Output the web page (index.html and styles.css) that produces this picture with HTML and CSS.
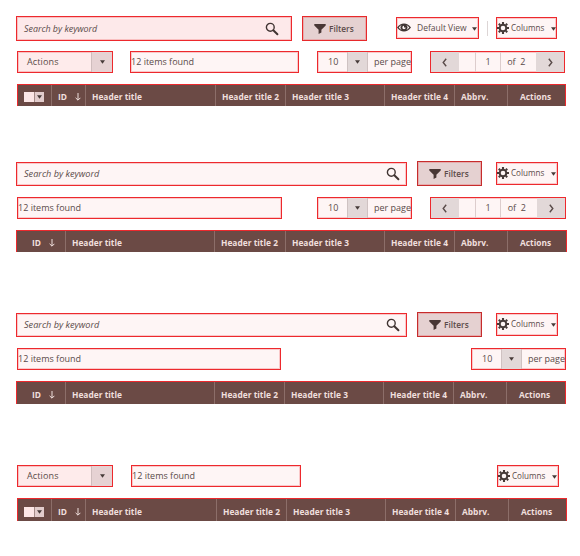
FILE: index.html
```html
<!DOCTYPE html>
<html lang="en">
<head>
<meta charset="utf-8">
<title>Data grid toolbars</title>
<link rel="stylesheet" href="styles.css">
</head>
<body>
<svg class="defs" width="0" height="0" aria-hidden="true">
  <symbol id="search" viewBox="0 0 14 14"><circle cx="5.3" cy="5.3" r="3.9" fill="none" stroke="currentColor" stroke-width="1.4"/><path d="M8.3 8.3L12.4 12.3" stroke="currentColor" stroke-width="2" stroke-linecap="round"/></symbol>
  <symbol id="filter" viewBox="0 0 12 10"><path d="M.3 0H11.7V1.4L7.4 5.8V8.6L4.6 10V5.8L.3 1.4Z" fill="currentColor"/></symbol>
  <symbol id="eye" viewBox="0 0 14 9"><path fill="currentColor" fill-rule="evenodd" d="M0 4.5Q3 .5 7 .5T14 4.5Q11 8.5 7 8.5T0 4.5ZM1.7 4.5Q3 6.4 4.7 7A3.5 3.5 0 0 1 4.7 2Q3 2.6 1.7 4.5ZM12.3 4.5Q11 2.6 9.3 2A3.5 3.5 0 0 1 9.3 7Q11 6.4 12.3 4.5ZM7 2.8A1.7 1.7 0 1 0 8.7 4.5H7Z"/></symbol>
  <symbol id="gear" viewBox="0 0 12 12"><circle cx="6" cy="6" r="3.3" fill="none" stroke="currentColor" stroke-width="2"/><path d="M6 0V2M6 10V12M0 6H2M10 6H12M1.8 1.8L3.2 3.2M8.8 8.8L10.2 10.2M10.2 1.8L8.8 3.2M3.2 8.8L1.8 10.2" stroke="currentColor" stroke-width="2.1"/></symbol>
  <symbol id="caret" viewBox="0 0 5 4"><path d="M0 .3H5L2.5 3.8Z" fill="currentColor"/></symbol>
  <symbol id="prev" viewBox="0 0 5 9"><path d="M4.2.8L1.2 4.5L4.2 8.2" fill="none" stroke="currentColor" stroke-width="1.4"/></symbol>
  <symbol id="next" viewBox="0 0 5 9"><path d="M.8.8L3.8 4.5L.8 8.2" fill="none" stroke="currentColor" stroke-width="1.4"/></symbol>
  <symbol id="sort" viewBox="0 0 6 8"><path d="M3 0V7M.6 4.8L3 7.2L5.4 4.8" fill="none" stroke="currentColor" stroke-width="1"/></symbol>
</svg>

<section class="panel first">
  <div class="row top">
    <div class="box search short"><span>Search by keyword</span><svg><use href="#search"/></svg></div>
    <div class="box filters"><svg><use href="#filter"/></svg><span>Filters</span></div>
    <div class="tools">
      <div class="box view"><svg class="eye"><use href="#eye"/></svg><span>Default View</span><svg class="caret"><use href="#caret"/></svg></div>
      <i class="rule"></i>
      <div class="box columns"><svg class="gear"><use href="#gear"/></svg><span>Columns</span><svg class="caret"><use href="#caret"/></svg></div>
    </div>
  </div>
  <div class="row middle">
    <div class="box actions"><span>Actions</span><b><svg class="caret"><use href="#caret"/></svg></b></div>
    <div class="box found"><span>12 items found</span></div>
    <div class="box perpage"><span>10</span><b><svg class="caret"><use href="#caret"/></svg></b><em>per page</em></div>
    <div class="box pager"><b><svg><use href="#prev"/></svg></b><i></i><span>1</span><span>of&nbsp; 2</span><b><svg><use href="#next"/></svg></b></div>
  </div>
  <div class="head selectable">
    <div class="pick"><i></i><b><svg class="caret"><use href="#caret"/></svg></b></div>
    <div class="id">ID<svg><use href="#sort"/></svg></div><div>Header title</div><div>Header title 2</div><div>Header title 3</div><div>Header title 4</div><div>Abbrv.</div><div class="last">Actions</div>
  </div>
</section>

<section class="panel second">
  <div class="row top">
    <div class="box search"><span>Search by keyword</span><svg><use href="#search"/></svg></div>
    <div class="box filters"><svg><use href="#filter"/></svg><span>Filters</span></div>
    <div class="box columns"><svg class="gear"><use href="#gear"/></svg><span>Columns</span><svg class="caret"><use href="#caret"/></svg></div>
  </div>
  <div class="row middle">
    <div class="box found wide"><span>12 items found</span></div>
    <div class="box perpage"><span>10</span><b><svg class="caret"><use href="#caret"/></svg></b><em>per page</em></div>
    <div class="box pager"><b><svg><use href="#prev"/></svg></b><i></i><span>1</span><span>of&nbsp; 2</span><b><svg><use href="#next"/></svg></b></div>
  </div>
  <div class="head">
    <div class="id">ID<svg><use href="#sort"/></svg></div><div>Header title</div><div>Header title 2</div><div>Header title 3</div><div>Header title 4</div><div>Abbrv.</div><div class="last">Actions</div>
  </div>
</section>

<section class="panel third">
  <div class="row top">
    <div class="box search"><span>Search by keyword</span><svg><use href="#search"/></svg></div>
    <div class="box filters"><svg><use href="#filter"/></svg><span>Filters</span></div>
    <div class="box columns"><svg class="gear"><use href="#gear"/></svg><span>Columns</span><svg class="caret"><use href="#caret"/></svg></div>
  </div>
  <div class="row middle">
    <div class="box found wide"><span>12 items found</span></div>
    <div class="box perpage"><span>10</span><b><svg class="caret"><use href="#caret"/></svg></b><em>per page</em></div>
  </div>
  <div class="head">
    <div class="id">ID<svg><use href="#sort"/></svg></div><div>Header title</div><div>Header title 2</div><div>Header title 3</div><div>Header title 4</div><div>Abbrv.</div><div class="last">Actions</div>
  </div>
</section>

<section class="panel fourth">
  <div class="row middle">
    <div class="box actions"><span>Actions</span><b><svg class="caret"><use href="#caret"/></svg></b></div>
    <div class="box found"><span>12 items found</span></div>
    <div class="box columns"><svg class="gear"><use href="#gear"/></svg><span>Columns</span><svg class="caret"><use href="#caret"/></svg></div>
  </div>
  <div class="head selectable">
    <div class="pick"><i></i><b><svg class="caret"><use href="#caret"/></svg></b></div>
    <div class="id">ID<svg><use href="#sort"/></svg></div><div>Header title</div><div>Header title 2</div><div>Header title 3</div><div>Header title 4</div><div>Abbrv.</div><div class="last">Actions</div>
  </div>
</section>
</body>
</html>
```
FILE: styles.css
```css
* { box-sizing: border-box; }
body {
  margin: 0;
  padding-top: 16px;
  background: #fff;
  color: #5a4b49;
  font: 9px/12px "Open Sans", "Noto Sans", sans-serif;
  white-space: nowrap;
}
svg { display: block; flex: none; }
.defs { position: absolute; }
.panel { margin-left: 16px; width: 551px; }
.row { display: flex; }
.top { height: 25px; margin-bottom: 10px; align-items: center; }
.middle { height: 22px; margin-bottom: 11px; padding-left: 1px; }
.first { height: 145px; }
.second { height: 151px; }
.third { height: 153px; }
.second .top, .third .top { margin-bottom: 11px; }

.box {
  display: flex;
  flex: none;
  align-items: center;
  height: 22px;
  border: 1px solid #ed292d;
  background: #fef5f5;
  box-shadow: inset 0 0 0 1px #ed292d38;
}
.box b {
  display: flex;
  align-items: center;
  justify-content: center;
  align-self: stretch;
  background: #e2d8d8;
}
.middle .box { padding-top: 0; }
.caret { width: 5px; height: 4px; color: #463a38; }

.search { width: 391px; height: 24px; padding: 0 6px 0 7px; justify-content: space-between; font-size: 9.15px; font-style: italic; }
.search svg { width: 14px; height: 14px; color: #403432; }
.search.short { width: 276px; height: 25px; padding-right: 12px; background: #fde9ea; font-size: 8.9px; }
.filters { width: 65px; height: 25px; margin-left: 10px; padding-left: 11px; border-color: #c62c2c; background: #e5d1d1; font-size: 8.3px; font-weight: 600; }
.first .filters { border-color: #e7292b; }
.filters svg { width: 12px; height: 10px; margin-right: 3px; color: #493735; }
.tools { display: flex; align-items: center; margin-left: 29px; padding-bottom: 1px; }
.view { width: 83px; padding-bottom: 1px; font-size: 8.5px; }
.eye { width: 14px; height: 9px; margin-right: 6px; color: #403432; }
.view span { width: 55px; }
.rule { width: 1px; height: 15px; margin: 0 8px; background: #ddd5d5; }
.columns { width: 62px; height: 23px; margin-left: 14px; padding-bottom: 1px; font-size: 8.1px; }
.tools .columns { width: 61px; height: 22px; margin-left: 0; }
.gear { width: 12px; height: 12px; margin-right: 2px; color: #463a38; }
.columns span { width: 40px; }
.columns .caret, .view .caret { margin-top: 2px; }

.actions { width: 96px; background: #feebeb; }
.actions span { width: 73px; padding-left: 9px; letter-spacing: .12px; }
.actions b { width: 21px; border-left: 1px solid #cfbdbd; background: #e6d2d3; }
.found { width: 169px; margin-left: 17px; }
.found.wide { width: 265px; margin-left: 0; }
.perpage { width: 95px; margin-left: 18px; overflow: hidden; }
.perpage span { width: 29px; padding-left: 10px; }
.perpage b { width: 22px; border: solid #cfc2c2; border-width: 0 1px; }
.perpage em { margin-left: 6px; font-style: normal; }
.pager { width: 136px; margin-left: 18px; }
.first .pager { width: 135px; }
.pager b { width: 28px; }
.pager svg { width: 5px; height: 9px; }
.pager i { width: 16px; }
.pager span { align-self: stretch; padding-top: 4px; border-left: 1px solid #ddcdcd; text-align: center; width: 26px; }
.pager span + span { width: 37px; padding-right: 5px; }
.first .pager span + span { width: 36px; }
.wide + .perpage { margin-left: 35px; }
.third .wide { width: 264px; }
.third .wide + .perpage { margin-left: 190px; }
.fourth .found { width: 170px; margin-left: 18px; }
.fourth .columns { height: 22px; margin-left: 196px; }

.head {
  display: grid;
  grid-template-columns: 48px 149px 71px 99px 70px 53px 1fr;
  height: 22px;
  border: solid #ed292d;
  border-width: 1px 1px 0;
  background: #6b4a45;
  color: #f0dfdd;
  font-size: 8.4px;
  font-weight: 700;
}
.head.selectable { grid-template-columns: 33px 34px 130px 70px 99px 70px 53px 1fr; margin-left: 1px; width: 549px; }
.head > div { display: flex; align-items: center; padding: 3px 0 0 6px; }
.head > div + div { border-left: 1px solid #8c6e69; }
.head .id { padding: 3px 0 0 15px; }
.selectable .id { padding-left: 6px; }
.id svg { width: 6px; height: 8px; margin-left: 8px; }
.head > .last { padding-left: 12px; }
.head .pick { padding: 3px 0 0 6px; }
.pick i, .pick b { height: 10px; background: #fce6e6; }
.pick i { width: 10px; }
.pick b { display: flex; align-items: center; justify-content: center; width: 10px; border-left: 1px solid #a48a87; background: #e2cccc; color: #514341; }
.third .head, .fourth .head { height: 23px; }
.third .head { width: 550px; grid-template-columns: 48px 149px 70px 99px 70px 53px 1fr; }
.fourth { padding-left: 1px; }
.fourth .middle { padding-left: 0; }
.fourth .head.selectable { margin-left: 0; width: 550px; grid-template-columns: 33px 34px 131px 70px 99px 70px 53px 1fr; }
```
